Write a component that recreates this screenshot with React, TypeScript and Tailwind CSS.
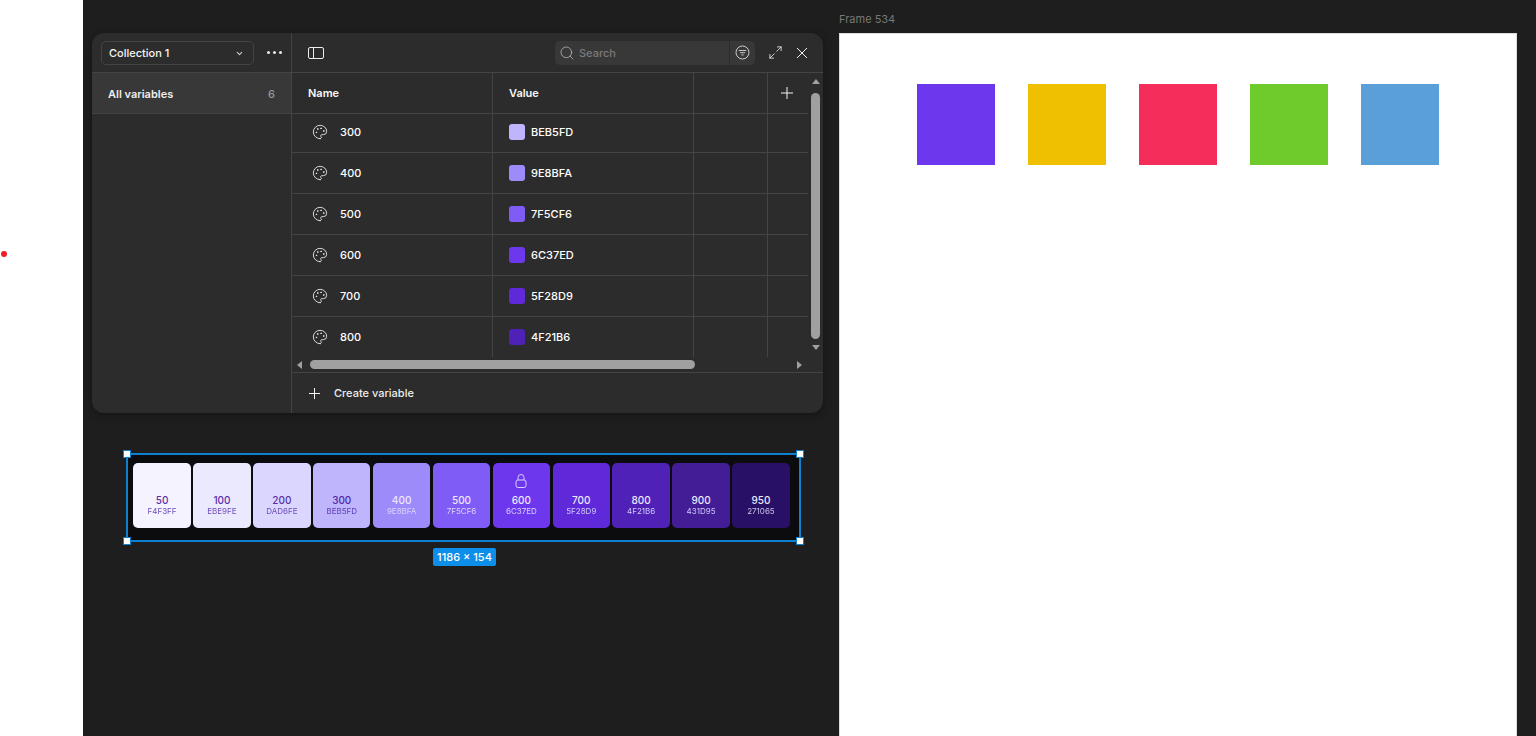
import { Palette, Search, Maximize2, ChevronDown } from "lucide-react";

const rows = [
  ["300", "BEB5FD", "bg-[#beb5fd]", "h-[39px] border-b border-[#444444]", "pb-[2px]"],
  ["400", "9E8BFA", "bg-[#9e8bfa]", "h-[41px] border-b border-[#444444]", ""],
  ["500", "7F5CF6", "bg-[#7f5cf6]", "h-[41px] border-b border-[#444444]", ""],
  ["600", "6C37ED", "bg-[#6c37ed]", "h-[41px] border-b border-[#444444]", ""],
  ["700", "5F28D9", "bg-[#5f28d9]", "h-[41px] border-b border-[#444444]", ""],
  ["800", "4F21B6", "bg-[#4f21b6]", "h-[40px]", ""],
];

const cards = [
  ["50", "F4F3FF", "bg-[#f4f3ff]", "text-[#5b2fa8]", "text-[#6f4dbd]"],
  ["100", "EBE9FE", "bg-[#ebe9fe]", "text-[#5b2fa8]", "text-[#6f4dbd]"],
  ["200", "DAD6FE", "bg-[#dad6fe]", "text-[#5b2fa8]", "text-[#6f4dbd]"],
  ["300", "BEB5FD", "bg-[#beb5fd]", "text-[#5227a5]", "text-[#5f3cb5]"],
  ["400", "9E8BFA", "bg-[#9e8bfa]", "text-[#ece8ff]", "text-[#d9d2fe]"],
  ["500", "7F5CF6", "bg-[#7f5cf6]", "text-[#ece8ff]", "text-[#ddd6fe]"],
  ["600", "6C37ED", "bg-[#6c37ed]", "text-[#ece8ff]", "text-[#d9d2fe]"],
  ["700", "5F28D9", "bg-[#5f28d9]", "text-[#ece8ff]", "text-[#d0c8fb]"],
  ["800", "4F21B6", "bg-[#4f21b6]", "text-[#ece8ff]", "text-[#d0c8fb]"],
  ["900", "431D95", "bg-[#431d95]", "text-[#ece8ff]", "text-[#d0c8fb]"],
  ["950", "271065", "bg-[#271065]", "text-[#ece8ff]", "text-[#c9c2ec]"],
];

const squares = ["bg-[#6c37ed]", "bg-[#efc000]", "bg-[#f52d5a]", "bg-[#6ecb2b]", "bg-[#5b9fd8]"];

function Handle({ pos }: { pos: string }) {
  return <div className={`absolute w-[8px] h-[8px] bg-white border border-[#0f80cf] ${pos}`} />;
}

function PlusIcon({ size }: { size: number }) {
  const m = size / 2;
  return (
    <svg width={size} height={size} viewBox={`0 0 ${size} ${size}`} fill="none" stroke="#f4f4f4" strokeWidth="1">
      <path d={`M${m} 0V${size}M0 ${m}H${size}`} />
    </svg>
  );
}

export default function App() {
  return (
    <div className="flex w-[1536px] h-[736px] overflow-hidden bg-[#1e1e1e] text-white font-['Inter',sans-serif]">
      <div className="relative w-[83px] h-full bg-white shrink-0">
        <div className="absolute left-[1px] top-[251px] w-[6px] h-[6px] rounded-full bg-[#ee1c25]" />
      </div>

      <div className="w-[756px] shrink-0 pl-[9px] pt-[33px]">
        <div className="flex w-[731px] h-[380px] rounded-xl bg-[#2c2c2c] overflow-hidden shadow-[0_2px_8px_rgba(0,0,0,0.35)]">
          <aside className="w-[200px] shrink-0 border-r border-[#444444] flex flex-col">
            <div className="h-[40px] shrink-0 border-b border-[#444444] flex items-center pl-[9px]">
              <div className="w-[153px] h-[24px] rounded-[5px] border border-[#444444] flex items-center justify-between pl-[7px] pr-[9px] text-[11px] font-medium text-[#f4f4f4]">
                <span className="pt-[1px]">Collection 1</span>
                <ChevronDown size={9} strokeWidth={3} className="text-[#cccccc] mt-[1px]" />
              </div>
              <div className="flex gap-[3px] ml-[13px]">
                <span className="w-[3px] h-[3px] rounded-full bg-[#e8e8e8]" />
                <span className="w-[3px] h-[3px] rounded-full bg-[#e8e8e8]" />
                <span className="w-[3px] h-[3px] rounded-full bg-[#e8e8e8]" />
              </div>
            </div>
            <div className="h-[41px] shrink-0 bg-[#383838] border-b border-[#444444] flex items-center justify-between pl-[16px] pr-[16px] pt-[2px] text-[11px]">
              <span className="font-semibold text-[#eeeeee]">All variables</span>
              <span className="font-medium text-[#9a9a9a]">6</span>
            </div>
          </aside>

          <main className="flex-1 min-w-0 flex flex-col">
            <div className="h-[40px] shrink-0 border-b border-[#444444] flex items-center pl-[16px]">
              <svg className="mt-[1px]" width="17" height="13" viewBox="0 0 17 13" fill="none" stroke="#eeeeee" strokeWidth="1">
                <rect x="0.5" y="0.5" width="15" height="11" rx="1.5" />
                <path d="M5.5 0.5v11" />
              </svg>
              <div className="ml-[230px] flex w-[200px] h-[24px] rounded-[5px] bg-[#383838] overflow-hidden">
                <div className="flex items-center flex-1 pl-[4px] gap-[4px] border-r border-[#2c2c2c]">
                  <Search size={16} strokeWidth={1.1} className="text-[#c4c4c4]" />
                  <span className="pt-[1px] text-[11px] font-medium text-[#7b7b7b]">Search</span>
                </div>
                <div className="w-[25px] flex items-center justify-center">
                  <svg width="15" height="15" viewBox="0 0 15 15" fill="none" stroke="#c8c8c8" strokeWidth="1">
                    <circle cx="7.5" cy="7.5" r="6.5" />
                    <path d="M3.8 5.5h7.4M5 7.7h5M6.3 9.9h2.4" />
                  </svg>
                </div>
              </div>
              <Maximize2 size={15} strokeWidth={1.2} className="ml-[13px] text-[#ffffff]" />
              <svg className="ml-[13px]" width="12" height="12" viewBox="0 0 12 12" fill="none" stroke="#f4f4f4" strokeWidth="1">
                <path d="M1 1L11 11M11 1L1 11" />
              </svg>
            </div>

            <div className="flex h-[284px] shrink-0">
              <div className="w-[516px] shrink-0 flex flex-col">
                <div className="flex h-[41px] border-b border-[#444444] text-[11px] font-semibold text-[#f8f8f8]">
                  <div className="w-[201px] border-r border-[#444444] flex items-center pl-[16px] pt-[1px]">Name</div>
                  <div className="w-[201px] border-r border-[#444444] flex items-center pl-[16px] pt-[1px]">Value</div>
                  <div className="w-[74px] border-r border-[#444444]" />
                  <div className="flex-1 flex items-center pl-[13px]">
                    <PlusIcon size={12} />
                  </div>
                </div>
                {rows.map((r) => (
                  <div key={r[0]} className={`flex text-[11px] font-medium text-[#ffffff] ${r[3]}`}>
                    <div className={`w-[201px] border-r border-[#444444] flex items-center pl-[20px] ${r[4]}`}>
                      <Palette size={16} strokeWidth={1.3} className="text-[#f0f0f0]" />
                      <span className="ml-[12px]">{r[0]}</span>
                    </div>
                    <div className={`w-[201px] border-r border-[#444444] flex items-center pl-[16px] ${r[4]}`}>
                      <span className={`w-[16px] h-[16px] rounded-[3px] ${r[2]}`} />
                      <span className="ml-[6px]">{r[1]}</span>
                    </div>
                    <div className="w-[74px] border-r border-[#444444]" />
                    <div className="flex-1" />
                  </div>
                ))}
              </div>
              <div className="w-[9px] ml-[3px] flex flex-col items-center">
                <div className="mt-[6px] w-0 h-0 border-x-[4.5px] border-x-transparent border-b-[5px] border-b-[#a0a0a0]" />
                <div className="mt-[9px] w-[9px] h-[246px] shrink-0 rounded-full bg-[#a0a0a0]" />
                <div className="mt-[6px] w-0 h-0 border-x-[4.5px] border-x-transparent border-t-[5px] border-t-[#a0a0a0]" />
              </div>
            </div>

            <div className="h-[16px] shrink-0 border-b border-[#444444] flex items-center">
              <div className="ml-[5px] w-0 h-0 border-y-[4.5px] border-y-transparent border-r-[5px] border-r-[#a0a0a0]" />
              <div className="ml-[8px] w-[385px] h-[9px] rounded-full bg-[#a0a0a0]" />
              <div className="ml-[102px] w-0 h-0 border-y-[4.5px] border-y-transparent border-l-[5px] border-l-[#a0a0a0]" />
            </div>

            <div className="flex-1 flex items-center pl-[17px] text-[11px] font-medium text-[#eeeeee]">
              <PlusIcon size={11} />
              <span className="ml-[14px] pt-[1px]">Create variable</span>
            </div>
          </main>
        </div>

        <div className="relative ml-[34px] mt-[40px] w-[675px] h-[89px] border-2 border-[#0f80cf] bg-[#0c0c0e] flex gap-[2.4px] pl-[5.3px] pt-[8px]">
          {cards.map((c) => (
            <div key={c[0]} className={`relative w-[57.5px] h-[65px] rounded-[5px] flex flex-col items-center justify-end pb-[12px] ${c[2]}`}>
              {c[0] === "600" && (
                <svg className="absolute top-[11px]" width="12" height="14" viewBox="0 0 12 14" fill="none" stroke="#d9ccff" strokeWidth="1">
                  <rect x="1" y="6" width="10" height="7.5" rx="2" />
                  <path d="M3 6V3.5a3 3 0 0 1 6 0V6" />
                </svg>
              )}
              <span className={`text-[10px] leading-[11px] font-medium ${c[3]}`}>{c[0]}</span>
              <span className={`text-[8px] leading-[10px] blur-[0.25px] ${c[4]}`}>{c[1]}</span>
            </div>
          ))}
          <Handle pos="-left-[5px] -top-[5px]" />
          <Handle pos="-right-[5px] -top-[5px]" />
          <Handle pos="-left-[5px] -bottom-[5px]" />
          <Handle pos="-right-[5px] -bottom-[5px]" />
          <div className="absolute left-[305px] top-[93px] w-[63px] h-[18px] rounded-[2px] bg-[#0d8ee8] flex items-center justify-center text-[11px] font-medium text-white whitespace-nowrap">
            1186 × 154
          </div>
        </div>
      </div>

      <div className="w-[678px] shrink-0 flex flex-col">
        <div className="h-[33px] shrink-0 flex items-center pt-[5px] text-[11px] text-[#777777]">Frame 534</div>
        <div className="flex-1 bg-white border-l border-t border-r border-[#dddddd] flex items-start gap-[33px] pl-[77px] pt-[50px]">
          {squares.map((s) => (
            <div key={s} className={`w-[78px] h-[81px] ${s}`} />
          ))}
        </div>
      </div>
    </div>
  );
}
